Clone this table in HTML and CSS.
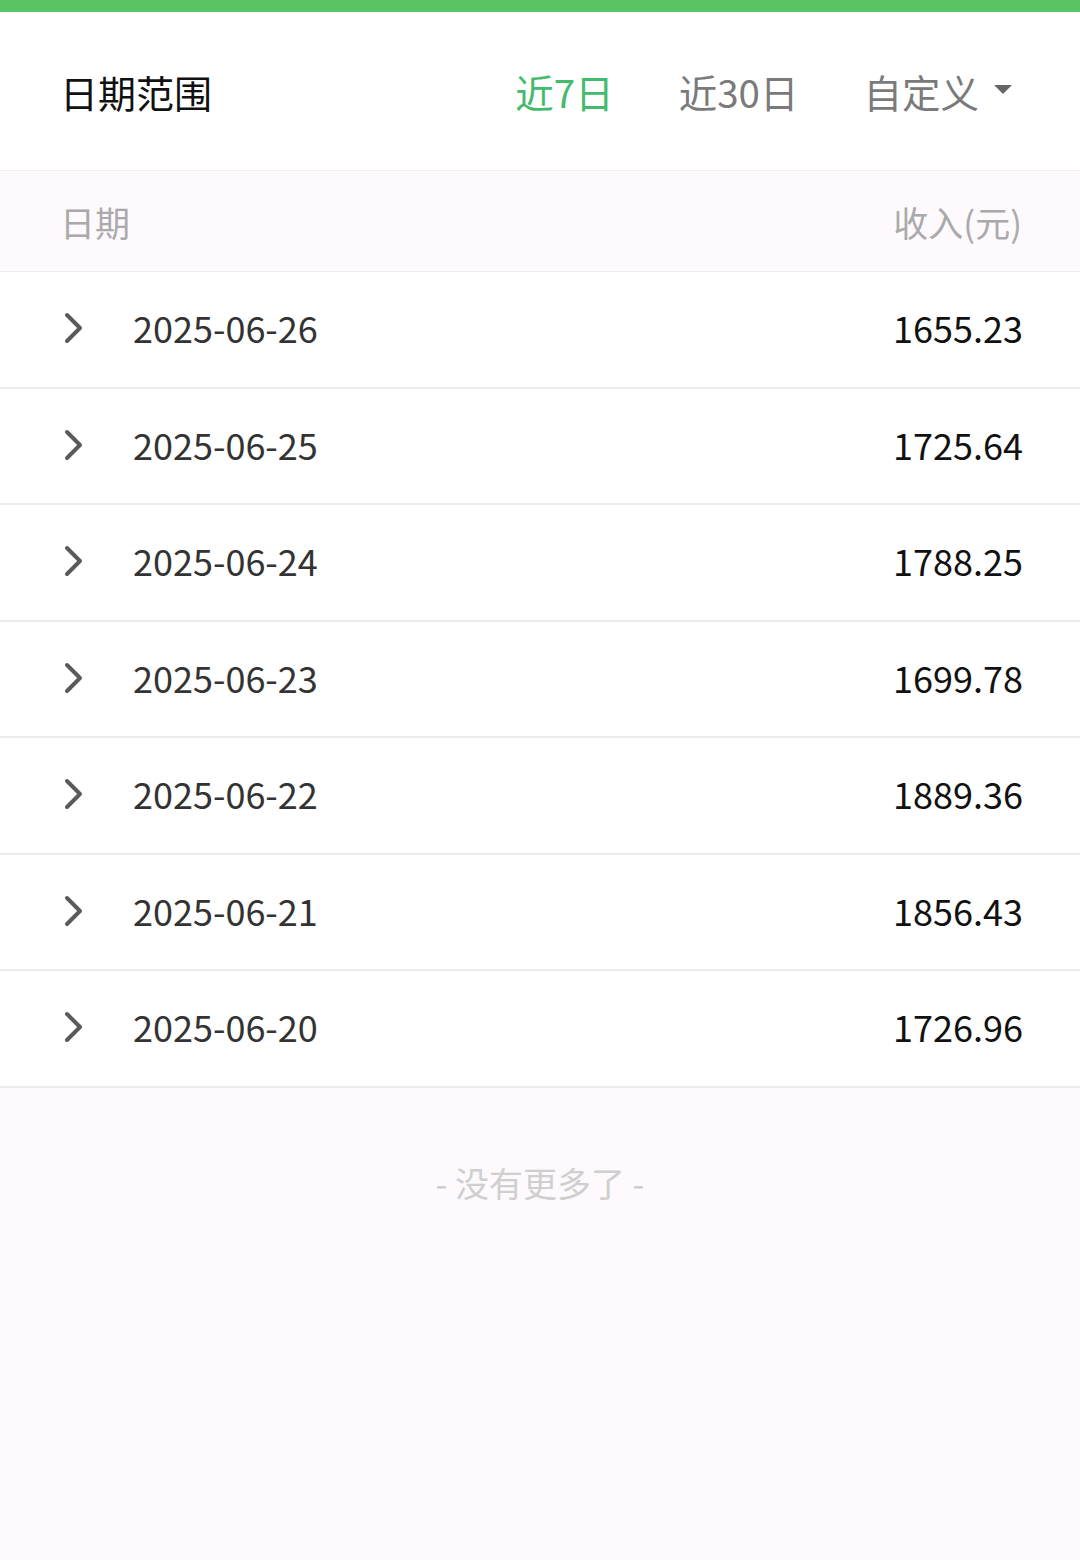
FILE: index.html
```html
<!DOCTYPE html>
<html lang="zh-CN">
<head>
<meta charset="utf-8">
<title>日期范围</title>
<link rel="stylesheet" href="styles.css">
</head>
<body>
<div class="topbar"></div>
<div class="range">
  <div class="range-title">日期范围</div>
  <div class="tabs">
    <span class="tab active">近7日</span>
    <span class="tab">近30日</span>
    <span class="tab custom">自定义<span class="caret"></span></span>
  </div>
</div>
<div class="thead">
  <span>日期</span>
  <span>收入(元)</span>
</div>
<div class="rows">
  <div class="row"><span class="left"><svg class="chev" viewBox="0 0 20 32"><path d="M3 3 L16 16 L3 29"/></svg><span class="date">2025-06-26</span></span><span class="amt">1655.23</span></div>
  <div class="row"><span class="left"><svg class="chev" viewBox="0 0 20 32"><path d="M3 3 L16 16 L3 29"/></svg><span class="date">2025-06-25</span></span><span class="amt">1725.64</span></div>
  <div class="row"><span class="left"><svg class="chev" viewBox="0 0 20 32"><path d="M3 3 L16 16 L3 29"/></svg><span class="date">2025-06-24</span></span><span class="amt">1788.25</span></div>
  <div class="row"><span class="left"><svg class="chev" viewBox="0 0 20 32"><path d="M3 3 L16 16 L3 29"/></svg><span class="date">2025-06-23</span></span><span class="amt">1699.78</span></div>
  <div class="row"><span class="left"><svg class="chev" viewBox="0 0 20 32"><path d="M3 3 L16 16 L3 29"/></svg><span class="date">2025-06-22</span></span><span class="amt">1889.36</span></div>
  <div class="row"><span class="left"><svg class="chev" viewBox="0 0 20 32"><path d="M3 3 L16 16 L3 29"/></svg><span class="date">2025-06-21</span></span><span class="amt">1856.43</span></div>
  <div class="row"><span class="left"><svg class="chev" viewBox="0 0 20 32"><path d="M3 3 L16 16 L3 29"/></svg><span class="date">2025-06-20</span></span><span class="amt">1726.96</span></div>
</div>
<div class="nomore">- 没有更多了 -</div>
</body>
</html>
```

FILE: styles.css
```css
* { box-sizing: border-box; }
html, body {
  margin: 0;
  padding: 0;
  background: #fdf9fd;
  font-family: "Noto Sans CJK SC", "Noto Sans", sans-serif;
  min-height: 1560px;
}
.topbar {
  height: 12px;
  background: #5ac465;
}
.range {
  height: 159px;
  background: #ffffff;
  display: flex;
  align-items: center;
  justify-content: space-between;
  padding: 0 68px 0 60px;
  border-bottom: 1px solid #f5eef1;
}
.range-title {
  font-size: 38px;
  color: #111;
}
.tabs {
  display: flex;
  align-items: center;
  gap: 65px;
}
.tab {
  font-size: 38.5px;
  color: #7a7a7a;
  display: flex;
  align-items: center;
}
.tab.active { color: #42bb6c; }
.caret {
  width: 0;
  height: 0;
  border-left: 9px solid transparent;
  border-right: 9px solid transparent;
  border-top: 9px solid #666;
  margin-left: 15px;
  margin-top: -4px;
}
.thead {
  height: 101px;
  display: flex;
  align-items: center;
  justify-content: space-between;
  padding: 0 58px 0 60px;
  font-size: 35px;
  color: #aaa;
  background: #fdf9fd;
  border-bottom: 1px solid #f0eef0;
}
.rows { background: #fff; }
.row {
  height: 116.5px;
  display: flex;
  align-items: center;
  justify-content: space-between;
  padding: 0 57px 4px 64px;
  border-bottom: 2px solid #ececec;
}
.left {
  display: flex;
  align-items: center;
}
.chev {
  width: 20px;
  height: 32px;
  fill: none;
  stroke: #5a5a5a;
  stroke-width: 4;
  stroke-linecap: round;
  stroke-linejoin: round;
  margin-right: 49px;
  margin-top: 2px;
}
.date {
  font-size: 36px;
  color: #333;
}
.amt {
  font-size: 36px;
  color: #111;
}
.nomore {
  text-align: center;
  font-size: 34px;
  color: #cfcfcf;
  padding-top: 70px;
}
```
